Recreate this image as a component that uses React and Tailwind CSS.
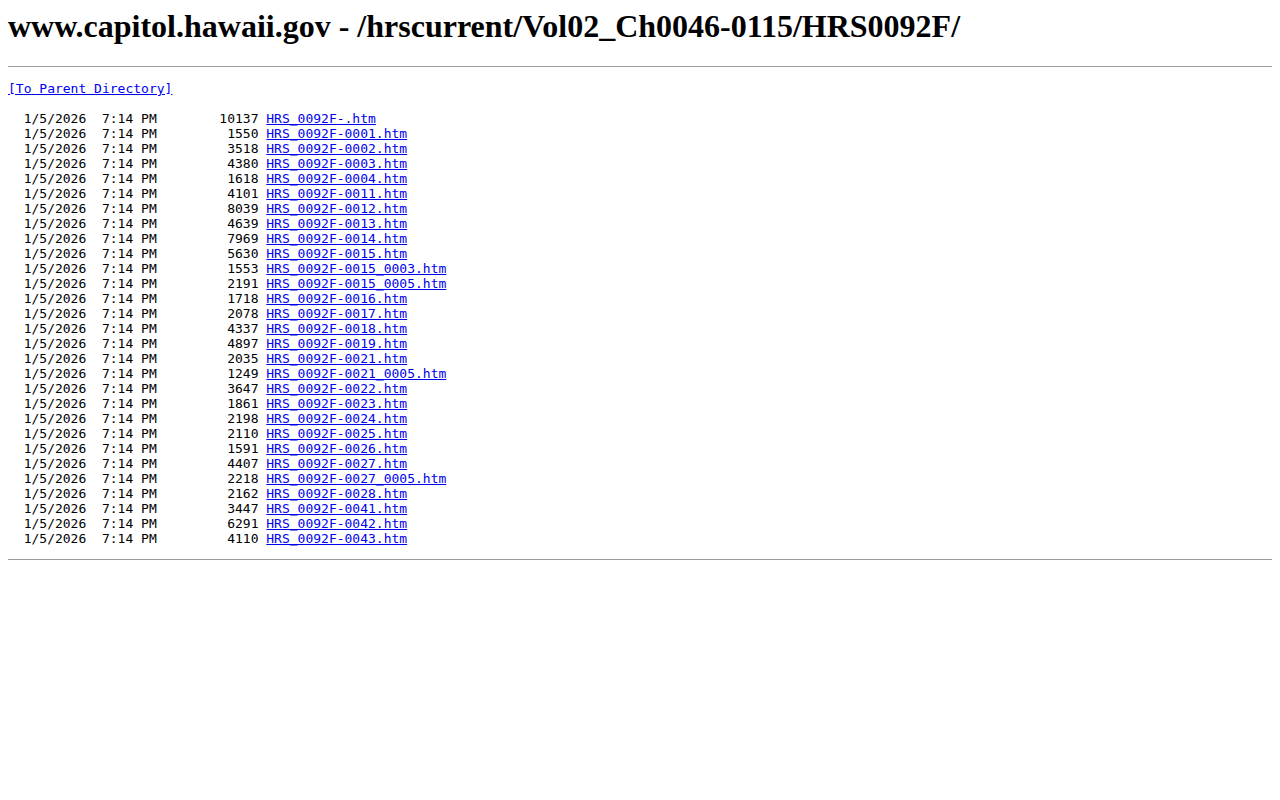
const rows = [
  ["10137", "HRS_0092F-.htm"],
  ["1550", "HRS_0092F-0001.htm"],
  ["3518", "HRS_0092F-0002.htm"],
  ["4380", "HRS_0092F-0003.htm"],
  ["1618", "HRS_0092F-0004.htm"],
  ["4101", "HRS_0092F-0011.htm"],
  ["8039", "HRS_0092F-0012.htm"],
  ["4639", "HRS_0092F-0013.htm"],
  ["7969", "HRS_0092F-0014.htm"],
  ["5630", "HRS_0092F-0015.htm"],
  ["1553", "HRS_0092F-0015_0003.htm"],
  ["2191", "HRS_0092F-0015_0005.htm"],
  ["1718", "HRS_0092F-0016.htm"],
  ["2078", "HRS_0092F-0017.htm"],
  ["4337", "HRS_0092F-0018.htm"],
  ["4897", "HRS_0092F-0019.htm"],
  ["2035", "HRS_0092F-0021.htm"],
  ["1249", "HRS_0092F-0021_0005.htm"],
  ["3647", "HRS_0092F-0022.htm"],
  ["1861", "HRS_0092F-0023.htm"],
  ["2198", "HRS_0092F-0024.htm"],
  ["2110", "HRS_0092F-0025.htm"],
  ["1591", "HRS_0092F-0026.htm"],
  ["4407", "HRS_0092F-0027.htm"],
  ["2218", "HRS_0092F-0027_0005.htm"],
  ["2162", "HRS_0092F-0028.htm"],
  ["3447", "HRS_0092F-0041.htm"],
  ["6291", "HRS_0092F-0042.htm"],
  ["4110", "HRS_0092F-0043.htm"],
];

export default function App() {
  return (
    <div className="p-2 bg-white min-h-[800px] text-black">
      <h1 className="font-['Liberation_Serif',serif] text-[32px] font-bold leading-[36px] m-0">
        www.capitol.hawaii.gov - /hrscurrent/Vol02_Ch0046-0115/HRS0092F/
      </h1>
      <hr className="mt-[22px] border-0 border-t border-[#9b9b9b]" />
      <pre className="mt-[14px] font-['DejaVu_Sans_Mono',monospace] text-[13px] leading-[15px] whitespace-pre">
        <a href="#" className="text-[#0000ee] underline">[To Parent Directory]</a>
        {"\n\n"}
        {rows.map(([size, name]) => (
          <span key={name}>
            {"  1/5/2026  7:14 PM " + size.padStart(12, " ") + " "}
            <a href="#" className="text-[#0000ee] underline">{name}</a>
            {"\n"}
          </span>
        ))}
      </pre>
      <hr className="mt-[13px] border-0 border-t border-[#9b9b9b]" />
    </div>
  );
}
